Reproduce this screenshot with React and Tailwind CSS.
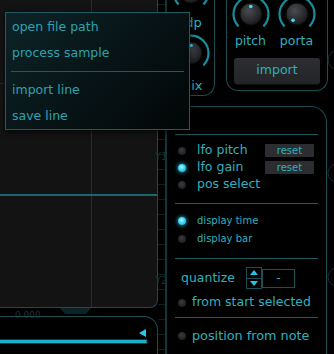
import React from 'react';

const Knob = ({ angle = -90 }) => {
  const rad = (angle * Math.PI) / 180;
  const dx = 22 + Math.cos(rad) * 7.5;
  const dy = 22 + Math.sin(rad) * 7.5;
  return (
    <svg width="44" height="44" viewBox="0 0 44 44" className="block">
      <defs>
        <radialGradient id="kb" cx="40%" cy="35%" r="70%">
          <stop offset="0%" stopColor="#4a4b4f" />
          <stop offset="70%" stopColor="#26272a" />
          <stop offset="100%" stopColor="#151517" />
        </radialGradient>
      </defs>
      <path d="M 9.6 34.4 A 17.5 17.5 0 1 1 34.4 34.4" fill="none" stroke="#1a8d9b" strokeWidth="2.2" />
      <circle cx="22" cy="22" r="11" fill="url(#kb)" stroke="#0b0b0c" strokeWidth="1" />
      <circle cx={dx} cy={dy} r="1.8" fill="#3fdcf4" />
    </svg>
  );
};

const Led = ({ on }) => (
  <span
    className={`block w-[8px] h-[8px] rounded-full ${
      on
        ? 'bg-[radial-gradient(circle_at_45%_40%,#b8f6ff,#3cd2f2_45%,#159cc4)] shadow-[0_0_4px_#2fc8f0]'
        : 'bg-[radial-gradient(circle_at_45%_40%,#3a3c41,#222327_60%,#151517)]'
    }`}
  />
);

const Sep = () => <div className="h-px bg-[#1d5a61] mx-[8px]" />;

export default function App() {
  return (
    <div className="relative w-[334px] h-[354px] bg-black overflow-hidden flex font-['DejaVu_Sans',sans-serif] text-[12.5px] text-[#2fb0bf]">
      {/* graph + transport */}
      <div className="w-[158px] flex flex-col shrink-0">
        <div className="relative h-[308px] bg-[#131313] border-r border-b border-[#1c4b51] rounded-br-[8px] overflow-hidden">
          <svg width="157" height="307" className="block">
            <line x1="91.5" y1="0" x2="91.5" y2="307" stroke="#1d3236" />
            <line x1="0" y1="83.5" x2="157" y2="83.5" stroke="#1b2b2e" />
            <line x1="0" y1="195" x2="157" y2="195" stroke="#1d6570" strokeWidth="2" />
          </svg>
        </div>
        <div className="relative h-[8px]">
          <span className="absolute left-[15px] top-[3px] text-[9px] leading-none text-[#16343a]">0.000</span>
          <svg width="157" height="8" className="absolute left-0 top-0">
            <polygon points="60,0 91,0 86,6 65,6" fill="#0c2428" />
          </svg>
        </div>
        <div className="relative flex-1 border-t border-r border-[#1c4b51] rounded-tr-[14px]">
          <svg width="150" height="38" className="absolute left-0 top-0">
            <polygon points="146,12 146,20 139,16" fill="#2cc8ea" />
            <rect x="-2" y="22.5" width="149" height="4" rx="1" fill="#1ab2c9" stroke="#173a40" />
          </svg>
        </div>
      </div>

      {/* Y strip */}
      <div className="w-[9px] shrink-0 border-r-2 border-[#12353a] relative">
        <svg width="7" height="354" className="absolute left-0 top-0">
          {Array.from({ length: 24 }).map((_, i) => (
            <line key={i} x1="0" x2="7" y1={i * 15 + 4.5} y2={i * 15 + 4.5} stroke="#0c1f22" />
          ))}
        </svg>
        <span className="absolute left-[-3px] top-[152px] text-[10px] leading-none text-[#143238]">Y1</span>
        <span className="absolute left-[-3px] top-[276px] text-[10px] leading-none text-[#143238]">Y2</span>
      </div>

      {/* right side */}
      <div className="relative flex-1 flex flex-col">
        <div className="h-[106px] flex shrink-0">
          <div className="w-[48px] h-[96px] border-r border-b border-[#1c4b51] rounded-br-[12px] flex flex-col items-center">
            <div className="-mt-[30px]">
              <Knob angle={-90} />
            </div>
            <span className="leading-none mt-[2px] ml-[6px] text-[13px]">dp</span>
            <div className="mt-[2px]">
              <Knob angle={-90} />
            </div>
            <span className="leading-none mt-[4px] text-[13px]">mix</span>
          </div>
          <div className="w-[11px]" />
          <div className="w-[102px] h-[91px] border-l border-r border-b border-[#1c4b51] rounded-b-[12px] flex flex-col">
            <div className="flex pl-[1px] gap-[1px] -mt-[8px]">
              <div className="flex flex-col items-center w-[45px]">
                <Knob angle={-92} />
                <span className="leading-none -mt-[1px] text-[12.5px]">pitch</span>
              </div>
              <div className="flex flex-col items-center w-[45px]">
                <Knob angle={122} />
                <span className="leading-none -mt-[1px] text-[12.5px]">porta</span>
              </div>
            </div>
            <div className="mx-[7px] mt-[10px] h-[26px] rounded-[3px] bg-[linear-gradient(#2d2e31,#232427)] shadow-[0_1px_0_#111] flex items-center justify-center text-[12.5px]">
              import
            </div>
          </div>
        </div>

        <div className="flex-1 w-[160px] border-t border-r border-[#1c4b51] rounded-tr-[16px] flex flex-col">
          <div className="h-[27px]" />
          <Sep />
          <div className="flex flex-col pt-[7px] pb-[10px]">
            {[
              ['lfo pitch', false, true],
              ['lfo gain', true, true],
              ['pos select', false, false],
            ].map(([label, on, reset]) => (
              <div key={label} className="h-[17px] flex items-center pl-[11px] pr-[12px]">
                <Led on={on} />
                <span className="ml-[11px] flex-1 leading-none">{label}</span>
                {reset && (
                  <span className="w-[49px] h-[13px] bg-[#2b2d31] rounded-[1px] flex items-center justify-center text-[10px] leading-none">
                    reset
                  </span>
                )}
              </div>
            ))}
          </div>
          <Sep />
          <div className="flex flex-col pt-[8px] pb-[10px]">
            {[
              ['display time', true],
              ['display bar', false],
            ].map(([label, on]) => (
              <div key={label} className="h-[18px] flex items-center pl-[11px]">
                <Led on={on} />
                <span className="ml-[11px] leading-none text-[10px]">{label}</span>
              </div>
            ))}
          </div>
          <Sep />
          <div className="flex items-center pl-[14px] mt-[8px] h-[22px]">
            <span className="leading-none w-[65px]">quantize</span>
            <div className="flex flex-col w-[16px] h-[22px] border border-[#1d4e55]">
              <div className="flex-1 flex items-center justify-center border-b border-[#1d4e55]">
                <svg width="8" height="5"><polygon points="4,0 8,5 0,5" fill="#2cc3e0" /></svg>
              </div>
              <div className="flex-1 flex items-center justify-center">
                <svg width="8" height="5"><polygon points="0,0 8,0 4,5" fill="#2cc3e0" /></svg>
              </div>
            </div>
            <div className="w-[33px] h-[19px] border border-[#1d4e55] flex items-center justify-center leading-none">-</div>
          </div>
          <div className="h-[19px] flex items-center pl-[11px] mt-[4px] mb-[5px]">
            <Led on={false} />
            <span className="ml-[6px] leading-none">from start selected</span>
          </div>
          <Sep />
          <div className="h-[18px] flex items-center pl-[11px] mt-[9px]">
            <Led on={false} />
            <span className="ml-[6px] leading-none text-[12.8px]">position from note</span>
          </div>
        </div>

        {/* faint controls peeking at the right edge */}
        <svg width="8" height="354" className="absolute right-0 top-0">
          <circle cx="11" cy="60" r="9" fill="none" stroke="#123034" />
          <circle cx="11" cy="173" r="9" fill="none" stroke="#123034" />
          <circle cx="11" cy="277" r="9" fill="none" stroke="#123034" />
        </svg>
      </div>

      {/* popup menu */}
      <div className="absolute left-[5px] top-[12px] w-[185px] h-[118px] border border-[#1e5a61] bg-[linear-gradient(135deg,#0d2428,#061113_60%,#020606)] shadow-[0_2px_6px_rgba(0,0,0,0.7)] text-[12.5px] text-[#2ba3b1]">
        <div className="h-[26px] flex items-center pl-[6px] mt-[1px]">open file path</div>
        <div className="h-[26px] flex items-center pl-[6px]">process sample</div>
        <div className="h-px bg-[#1d5a61] mx-[5px] my-[5px]" />
        <div className="h-[26px] flex items-center pl-[6px] mt-[2px]">import line</div>
        <div className="h-[26px] flex items-center pl-[6px]">save line</div>
      </div>
    </div>
  );
}
